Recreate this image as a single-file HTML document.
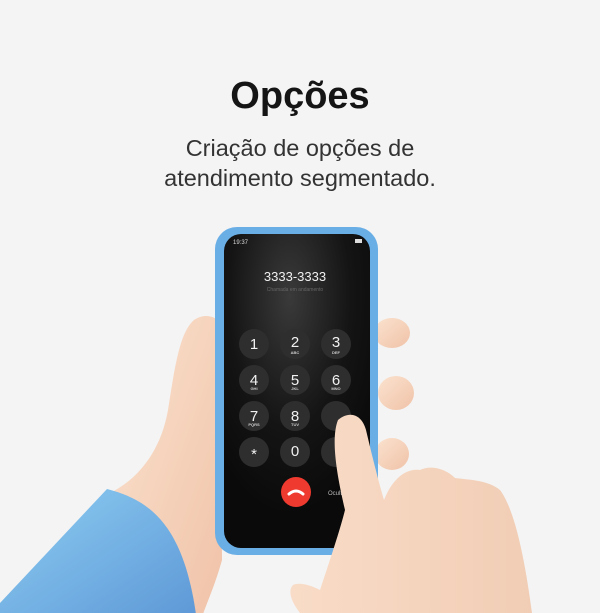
<!DOCTYPE html>
<html><head><meta charset="utf-8"><style>
html,body{margin:0;padding:0;width:600px;height:613px;overflow:hidden;background:#f4f4f4;font-family:"Liberation Sans",sans-serif}
.t{position:absolute;left:0;width:600px;text-align:center}
</style></head><body>
<div class="t" style="top:75px;font-size:38px;font-weight:bold;color:#151515">Opções</div>
<div class="t" style="top:133px;font-size:23.5px;line-height:30px;color:#333">Criação de opções de<br>atendimento segmentado.</div>
<svg width="600" height="613" style="position:absolute;left:0;top:0">
<defs>
<radialGradient id="scr" cx="0.45" cy="0.2" r="0.7"><stop offset="0" stop-color="#3a3a3a"/><stop offset="0.6" stop-color="#141414"/><stop offset="1" stop-color="#0a0a0a"/></radialGradient>
<linearGradient id="skin" x1="0" y1="0" x2="1" y2="1"><stop offset="0" stop-color="#fbe3cf"/><stop offset="1" stop-color="#f0c2a8"/></linearGradient>
<linearGradient id="skin2" x1="0" y1="0" x2="1" y2="0"><stop offset="0" stop-color="#f9dcc7"/><stop offset="1" stop-color="#f1cdb5"/></linearGradient>
<linearGradient id="sl" x1="0" y1="0" x2="1" y2="1"><stop offset="0" stop-color="#8dcdf2"/><stop offset="1" stop-color="#5d97d6"/></linearGradient>
</defs>
<ellipse cx="392" cy="333" rx="18" ry="15" fill="url(#skin)"/>
<ellipse cx="396" cy="393" rx="18" ry="17" fill="url(#skin)"/>
<ellipse cx="392" cy="454" rx="17" ry="16" fill="url(#skin)"/>
<path d="M112,492 C135,480 160,455 168,410 C175,365 180,332 194,320 C204,313 215,316 220,322 L222,560 C215,585 208,600 200,622 L130,622 Z" fill="url(#skin)"/>
<path d="M0,603 L107,489 C150,500 185,525 197,622 L0,622 Z" fill="url(#sl)"/>
<rect x="215" y="227" width="163" height="328" rx="22" fill="#6aaee6"/>
<rect x="224" y="234" width="146" height="314" rx="17" fill="url(#scr)"/>
<text x="233" y="244" font-size="6" fill="#ddd">19:37</text>
<rect x="355" y="239" width="7" height="4" fill="#ddd"/>
<text x="295" y="281" font-size="13" fill="#f0f0f0" text-anchor="middle">3333-3333</text>
<text x="295" y="291" font-size="5" fill="#666" text-anchor="middle">Chamada em andamento</text>
<g fill="#2e2e2e">
<circle cx="254" cy="344" r="15"/><circle cx="295" cy="344" r="15"/><circle cx="336" cy="344" r="15"/>
<circle cx="254" cy="380" r="15"/><circle cx="295" cy="380" r="15"/><circle cx="336" cy="380" r="15"/>
<circle cx="254" cy="416" r="15"/><circle cx="295" cy="416" r="15"/><circle cx="336" cy="416" r="15"/>
<circle cx="254" cy="452" r="15"/><circle cx="295" cy="452" r="15"/><circle cx="336" cy="452" r="15"/>
</g>
<g fill="#f2f2f2" font-size="15" text-anchor="middle">
<text x="254" y="349">1</text><text x="295" y="347">2</text><text x="336" y="347">3</text>
<text x="254" y="385">4</text><text x="295" y="385">5</text><text x="336" y="385">6</text>
<text x="254" y="421">7</text><text x="295" y="421">8</text>
<text x="254" y="459">*</text><text x="295" y="456">0</text>
</g>
<g fill="#ccc" font-size="4" text-anchor="middle" font-weight="bold">
<text x="295" y="354">ABC</text><text x="336" y="354">DEF</text>
<text x="254" y="390">GHI</text><text x="295" y="390">JKL</text><text x="336" y="390">MNO</text>
<text x="254" y="426">PQRS</text><text x="295" y="426">TUV</text>
</g>
<circle cx="296" cy="492" r="15" fill="#ef3a2f"/>
<path d="M289,494 Q296,488 303,494" stroke="#fff" stroke-width="3" fill="none" stroke-linecap="round"/>
<text x="328" y="495" font-size="6" fill="#bbb">Ocultar</text>
<path d="M338,420 C350,410 362,415 366,430 C372,455 378,480 384,500 C392,480 405,468 420,470 C430,465 445,468 455,478 C470,480 488,480 500,490 C515,510 525,560 532,613 L300,613 C290,600 288,590 293,585 C300,582 310,585 320,590 C330,560 340,530 345,510 C338,480 330,440 338,420 Z" fill="url(#skin2)"/>
</svg>
</body></html>
